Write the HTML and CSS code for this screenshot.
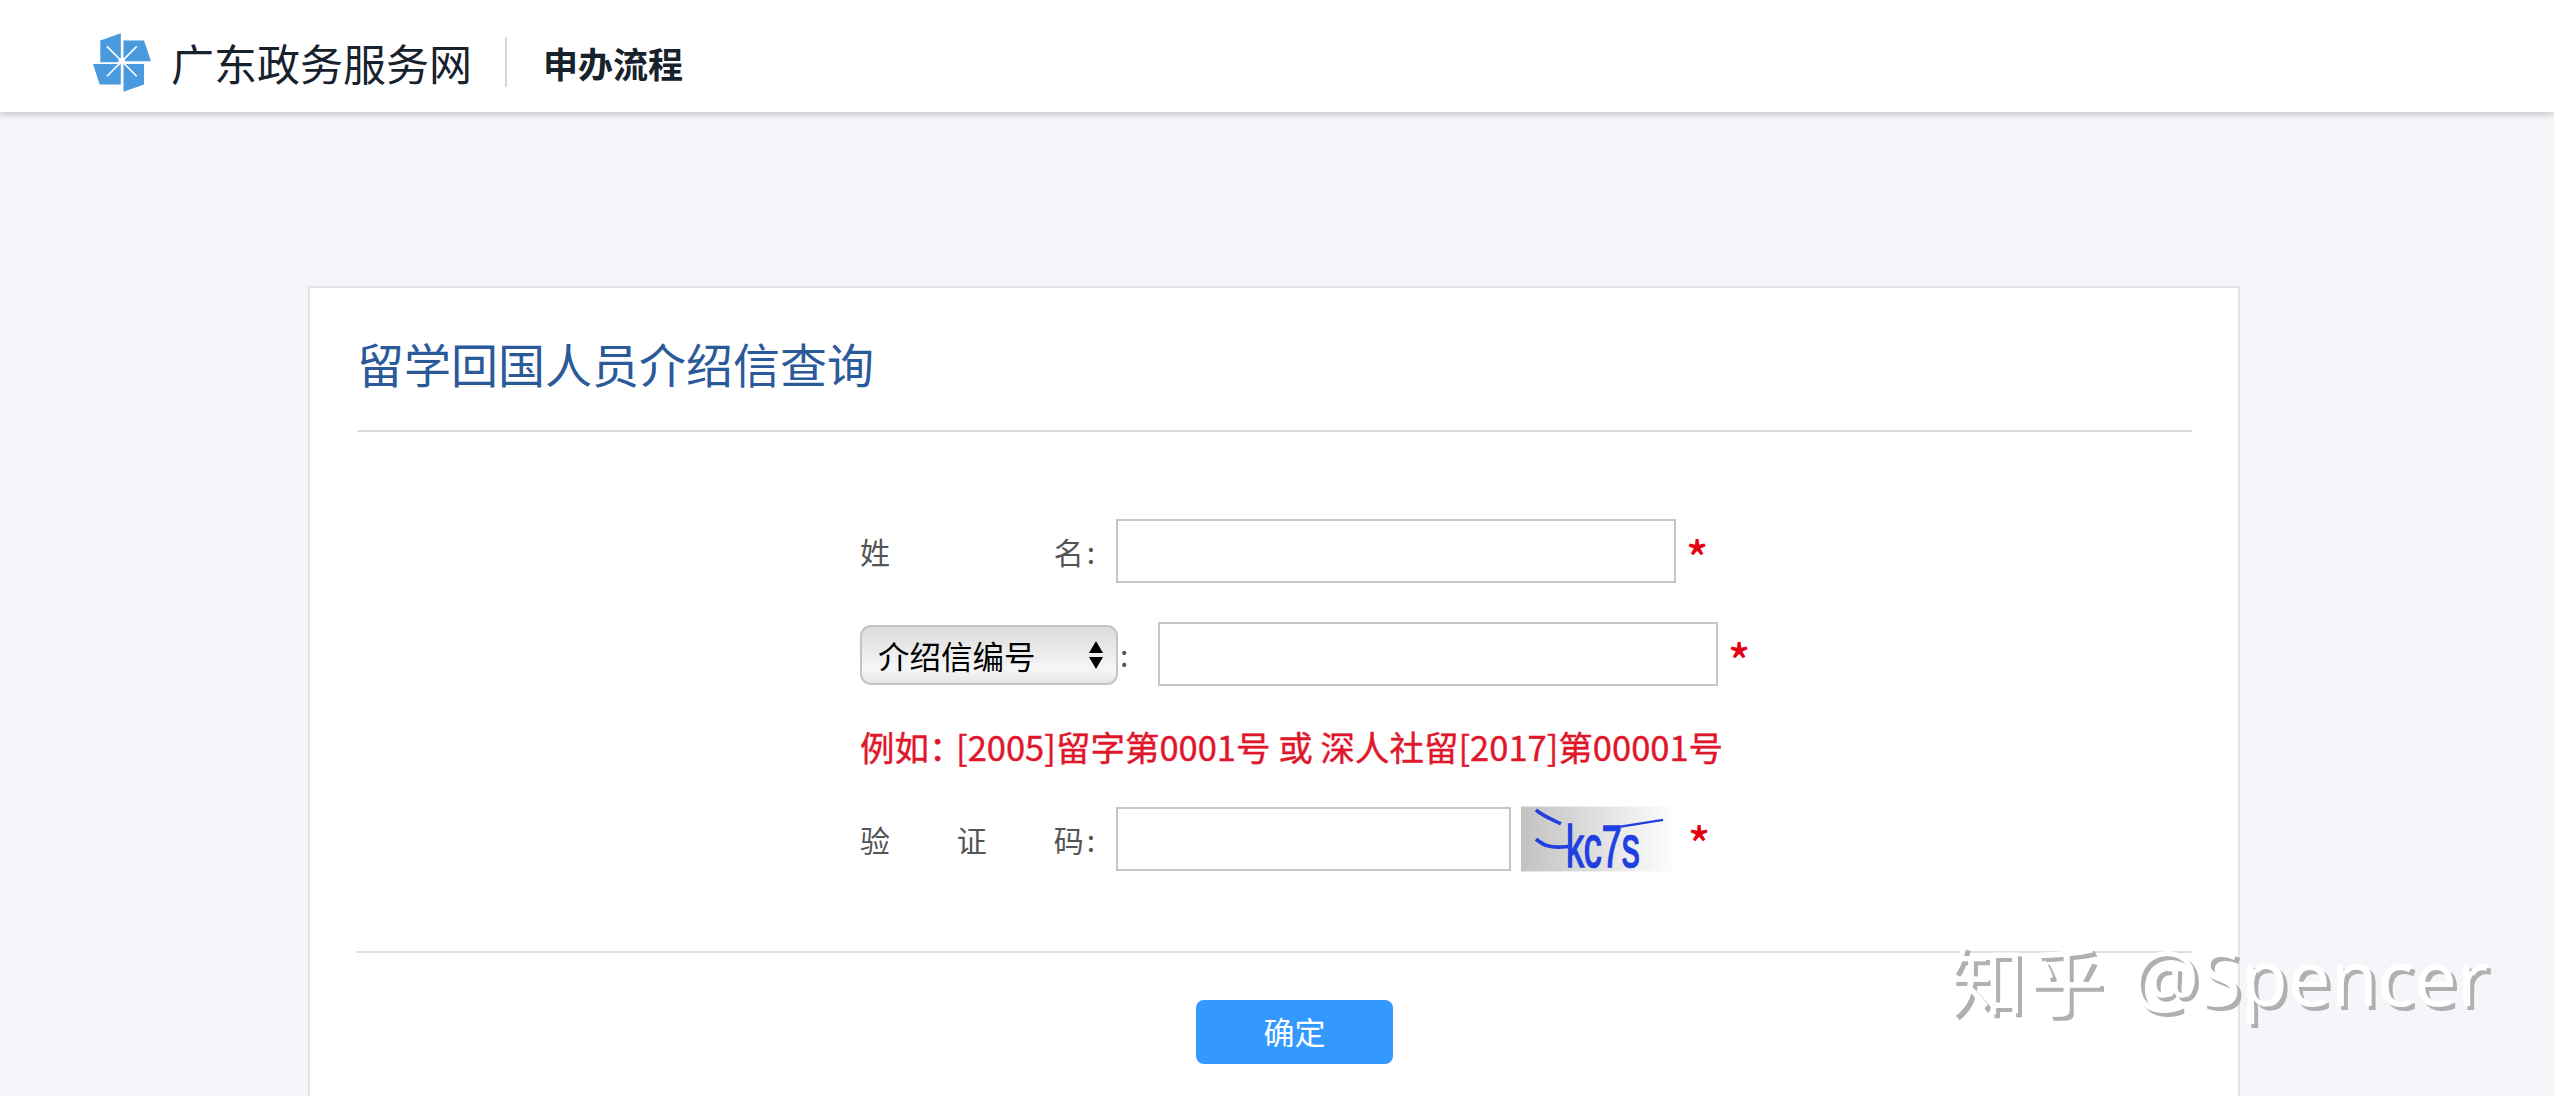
FILE: index.html
```html
<!DOCTYPE html>
<html lang="zh-CN">
<head>
    <meta charset="UTF-8">
    <title>留学回国人员介绍信查询</title>
    <link rel="stylesheet" href="styles.css">
</head>
<body>
    <header class="topbar">
        <svg class="logo" viewBox="38 40 175 177" width="58" height="59">
            <polygon fill="#4a9ade" points="60,62 122,40 122,128 60,128"/>
            <polygon fill="#4a9ade" points="130,62 192,62 213,125 130,125"/>
            <polygon fill="#4a9ade" points="130,133 192,133 192,195 130,217"/>
            <polygon fill="#4a9ade" points="38,133 122,133 122,195 58,195"/>
            <path d="M80 80L170 170M170 80L80 170" stroke="#fff" stroke-width="5" fill="none"/>
            <circle cx="125" cy="125" r="10" fill="#fff"/>
        </svg>
        <span class="site-name">广东政务服务网</span>
        <span class="page-name">申办流程</span>
    </header>

    <main class="page">
        <section class="card">
            <h1 class="card-title">留学回国人员介绍信查询</h1>
            <form class="query-form">
                <div class="row">
                    <label class="label"><span>姓</span><span>名:</span></label>
                    <input class="field field-name" type="text">
                    <span class="required">*</span>
                </div>
                <div class="row row-letter">
                    <div class="select">介绍信编号<span class="arrows"></span></div>
                    <span class="colon">:</span>
                    <input class="field field-name" type="text">
                    <span class="required">*</span>
                </div>
                <p class="hint"><span class="hint-prefix">例如：</span>[2005]留字第0001号 或 深人社留[2017]第00001号</p>
                <div class="row row-code">
                    <label class="label"><span>验</span><span>证</span><span>码:</span></label>
                    <input class="field field-code" type="text">
                    <svg class="captcha" viewBox="63 45 472 195" width="157" height="66">
                        <defs>
                            <linearGradient id="captcha-bg">
                                <stop offset="0" stop-color="#c2c2c2"/>
                                <stop offset="1" stop-color="#fff"/>
                            </linearGradient>
                        </defs>
                        <rect x="63" y="45" width="472" height="195" fill="url(#captcha-bg)"/>
                        <path d="M108 55C130 75 160 85 183 97M108 143C130 160 145 172 205 165" stroke="#1f3fe0" stroke-width="11" fill="none"/>
                        <path d="M320 112L490 85" stroke="#1f3fe0" stroke-width="7" fill="none"/>
                        <text class="captcha-text" transform="translate(198 228) scale(.6 1)">kc7s</text>
                    </svg>
                    <span class="required required-code">*</span>
                </div>
                <div class="actions">
                    <button class="submit" type="button">确定</button>
                </div>
            </form>
        </section>
    </main>

    <div class="watermark"><span class="watermark-cn">知乎</span><span class="watermark-en">@Spencer</span></div>
</body>
</html>
```

FILE: styles.css
```css
html, body {
    height: 1096px;
    overflow: hidden;
}
body {
    margin: 0;
    background-color: #f5f6fa;
    font-family: "Noto Sans CJK SC", "Noto Sans", sans-serif;
    color: #555;
    position: relative;
}
.topbar {
    height: 112px;
    box-sizing: border-box;
    padding: 12px 0 0 93px;
    background-color: #fff;
    box-shadow: 0 2px 7px rgba(0, 0, 0, 0.22);
    display: flex;
    align-items: center;
}
.logo {
    flex-shrink: 0;
}
.site-name {
    font-size: 43px;
    color: #17222d;
    margin-left: 20px;
    padding-right: 33px;
    line-height: 50px;
    border-right: 2px solid #d5d5d5;
}
.page-name {
    font-size: 35px;
    font-weight: 700;
    color: #17222d;
    margin-left: 36px;
}
.page {
    padding: 174px 314px 0 308px;
}
.card {
    background-color: #fff;
    border: 2px solid #e0e3e8;
    padding: 0 46px 0 47px;
    height: 900px;
}
.card-title {
    margin: 0;
    height: 144px;
    line-height: 150px;
    font-size: 47px;
    font-weight: 400;
    color: #2b5a9b;
    border-bottom: 2px solid #ddd;
    box-sizing: border-box;
}
.query-form {
    padding-top: 87px;
}
.row {
    display: flex;
    align-items: center;
    margin-left: 503px;
    height: 64px;
}
.row-letter {
    margin-top: 39px;
}
.row-code {
    margin-top: 37px;
    height: 68px;
}
.label {
    width: 238px;
    display: flex;
    justify-content: space-between;
    font-size: 30px;
    letter-spacing: 3px;
    margin-right: 18px;
}
.field {
    height: 64px;
    box-sizing: border-box;
    border: 2px solid #c6c6c6;
    background-color: #fff;
    outline: none;
    padding: 0 10px;
}
.field-name {
    width: 560px;
}
.field-code {
    width: 395px;
}
.required {
    color: #e60012;
    font-size: 46px;
    font-weight: 500;
    margin-left: 10px;
    line-height: 1;
    padding-top: 9px;
}
.required-code {
    padding-top: 5px;
}
.select {
    position: relative;
    width: 258px;
    height: 60px;
    margin-top: 2px;
    box-sizing: border-box;
    display: flex;
    align-items: center;
    border: 2px solid #c4c4c4;
    border-radius: 11px;
    background: linear-gradient(#dcdcdc, #f6f6f6 75%, #e6e6e6);
    font-size: 31.5px;
    color: #000;
    padding-left: 16px;
}
.arrows {
    position: absolute;
    right: 13px;
    top: 14px;
    width: 0;
    height: 0;
    border-left: 7px solid transparent;
    border-right: 7px solid transparent;
    border-bottom: 12px solid #000;
}
.arrows::after {
    content: "";
    position: absolute;
    left: -7px;
    top: 16px;
    border-left: 7px solid transparent;
    border-right: 7px solid transparent;
    border-top: 12px solid #000;
}
.colon {
    font-size: 30px;
    width: 40px;
    padding-left: 2px;
    box-sizing: border-box;
}
.hint {
    margin: 42px 0 0 503px;
    height: 40px;
    line-height: 36px;
    font-size: 34.5px;
    font-weight: 400;
    -webkit-text-stroke: 0.4px #e0162b;
    color: #e0162b;
    white-space: nowrap;
}
.hint-prefix {
    display: inline-block;
    width: 96px;
    white-space: nowrap;
}
.captcha {
    margin-left: 10px;
    flex-shrink: 0;
    overflow: visible;
}
.captcha-text {
    font-family: "Liberation Sans", sans-serif;
    font-size: 180px;
    fill: #1f3fe0;
    stroke: #1f3fe0;
    stroke-width: 5px;
}
.actions {
    margin-top: 78px;
    border-top: 2px solid #ddd;
    padding: 47px 0 0 40px;
    display: flex;
    justify-content: center;
}
.submit {
    width: 197px;
    height: 64px;
    border: none;
    border-radius: 8px;
    background-color: #3399ff;
    color: #fff;
    font-family: inherit;
    font-size: 31px;
    padding: 0 0 4px;
}
.watermark {
    position: absolute;
    left: 1949px;
    top: 922px;
    display: flex;
    align-items: center;
    color: #fff;
    text-shadow: 4px 4px 0 #b0b0b0;
    line-height: 110px;
}
.watermark-cn {
    font-size: 76px;
    letter-spacing: 3px;
}
.watermark-en {
    font-family: "Noto Sans", sans-serif;
    font-size: 76px;
    margin-left: 24px;
}
```
